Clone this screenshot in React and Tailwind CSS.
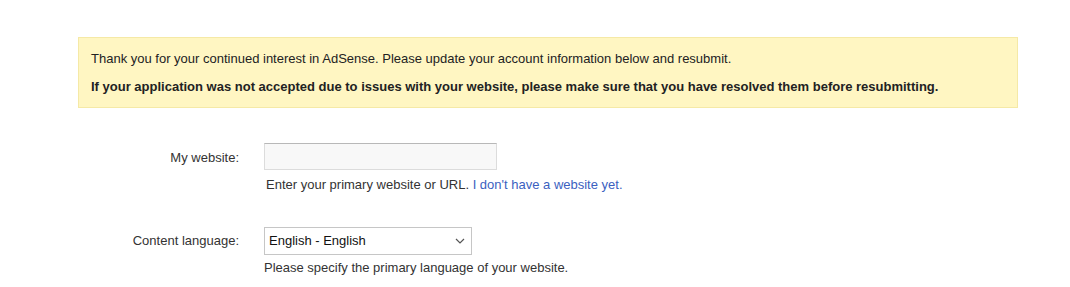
import React from 'react';

const App = () => {
    return (
        <div className="w-[1070px] h-[287px] bg-white text-[13px] text-[#222] overflow-hidden" style={{ fontFamily: '"Liberation Sans", Arial, sans-serif' }}>
            {/* Notice */}
            <div className="pt-[37px] pl-[78px]">
                <div className="w-[940px] h-[71px] bg-[#fff6c2] border border-[#f5e9a6] pl-[12px] pt-[13px]">
                    <p className="leading-[16px]">Thank you for your continued interest in AdSense. Please update your account information below and resubmit.</p>
                    <p className="leading-[16px] mt-[12px] font-bold">If your application was not accepted due to issues with your website, please make sure that you have resolved them before resubmitting.</p>
                </div>
            </div>

            {/* Form */}
            <div className="mt-[35px]">
                <div className="flex">
                    <label className="w-[240px] pr-[1px] text-right pt-[7px] leading-[16px] text-[#333]">My website:</label>
                    <div className="ml-[24px]">
                        <input type="text" className="block w-[233px] h-[27px] bg-[#f8f8f8] border border-[#dcdcdc] border-t-[#b8b8b8] outline-none" />
                        <p className="mt-[7px] ml-[2px] leading-[16px] text-[#333]">
                            Enter your primary website or URL. <a className="text-[#3b5fbf]">I don't have a website yet.</a>
                        </p>
                    </div>
                </div>

                <div className="flex mt-[34px]">
                    <label className="w-[240px] pr-[1px] text-right pt-[6px] leading-[16px] text-[#333]">Content language:</label>
                    <div className="ml-[24px]">
                        <div className="w-[208px] h-[28px] border border-[#c6c6c6] bg-white flex items-center justify-between pl-[4px] pr-[6px]">
                            <span className="text-[13px] text-[#111] leading-[16px]">English - English</span>
                            <svg width="10" height="6" viewBox="0 0 10 6" fill="none">
                                <path d="M1 1l4 4 4-4" stroke="#555" strokeWidth="1.2" />
                            </svg>
                        </div>
                        <p className="mt-[5px] leading-[16px] text-[#333]">Please specify the primary language of your website.</p>
                    </div>
                </div>
            </div>
        </div>
    );
};

export default App;
